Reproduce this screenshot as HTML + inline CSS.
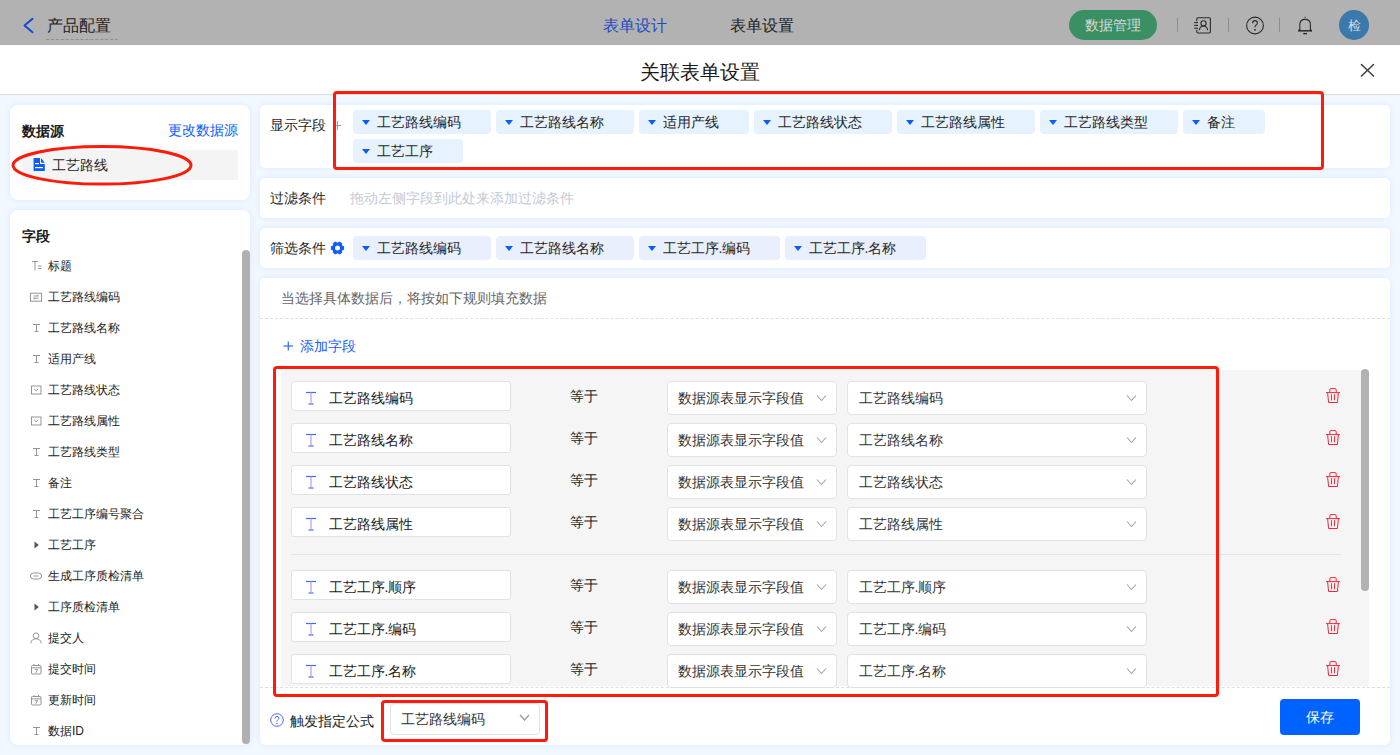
<!DOCTYPE html>
<html><head><meta charset="utf-8">
<style>
*{box-sizing:border-box;}
html,body{margin:0;padding:0;width:1400px;height:755px;overflow:hidden;background:#f2f8ff;}
body{position:relative;font-family:"Liberation Sans",sans-serif;color:#262626;}
.a{position:absolute;}
.t{position:absolute;white-space:nowrap;line-height:20px;}
svg{position:absolute;overflow:visible;}
#hdr{left:0;top:0;width:1400px;height:45px;background:#b2b2b2;}
#mh{left:0;top:45px;width:1400px;height:50px;background:#fff;border-bottom:1px solid #dcdcdc;}
.card{position:absolute;background:#fff;border-radius:8px;box-shadow:0 0 6px rgba(0,130,255,0.12);}
.card2{position:absolute;background:#fff;border-radius:5px;box-shadow:0 0 6px rgba(0,130,255,0.11);}
.tag{position:absolute;height:24px;border-radius:4px;background:#e6f2fe;}
.tag2{background:#e9effc;}
.tri{position:absolute;left:8.5px;top:10px;width:0;height:0;border-left:4.25px solid transparent;border-right:4.25px solid transparent;border-top:5px solid #0a5cff;}
.tag .t{left:23.5px;top:2px;font-size:14px;color:#262626;}
.li{font-size:12px;color:#222;}
.inp{position:absolute;left:291px;width:220px;height:30px;background:#fff;border:1px solid #e2e2e2;border-radius:3px;}
.sel{position:absolute;height:34px;background:#fff;border:1px solid #e2e2e2;border-radius:4px;}
.red{position:absolute;border:3px solid #ff1a0a;border-radius:4px;}
</style></head><body>

<!-- top header (under overlay) -->
<div id="hdr" class="a">
  <svg style="left:0;top:0" width="40" height="45"><polyline points="32.5,18.8 24.5,25.5 32.5,32.2" fill="none" stroke="#1448d0" stroke-width="2" stroke-linecap="round" stroke-linejoin="round"/></svg>
  <div class="t" style="left:47px;top:16px;font-size:16px;color:#222">产品配置</div>
  <div class="a" style="left:46px;top:39px;width:72px;height:0;border-top:1px dashed #8f8f8f"></div>
  <div class="t" style="left:603px;top:16px;font-size:16px;color:#1f4ac2">表单设计</div>
  <div class="t" style="left:730px;top:16px;font-size:16px;color:#222">表单设置</div>
  <div class="a" style="left:1069px;top:10px;width:88px;height:30px;border-radius:15px;background:#3a8f63"></div>
  <div class="t" style="left:1085px;top:15px;font-size:14px;color:#d9d9d9">数据管理</div>
  <div class="a" style="left:1177px;top:18px;width:1px;height:14px;background:#8c8c8c"></div>
  <div class="a" style="left:1228px;top:18px;width:1px;height:14px;background:#8c8c8c"></div>
  <div class="a" style="left:1279px;top:18px;width:1px;height:14px;background:#8c8c8c"></div>
  <!-- contact book -->
  <svg style="left:0;top:0" width="1400" height="45">
    <g fill="none" stroke="#2a2a2a" stroke-width="1.1">
      <path d="M1196.8,21.2 V18.9 Q1196.8,17.8 1198,17.8 H1209.2 Q1210.4,17.8 1210.4,19 V31.8 Q1210.4,33 1209.2,33 H1198 Q1196.8,33 1196.8,31.8 V29.8"/>
      <line x1="1194.2" y1="22.6" x2="1198" y2="22.6"/>
      <line x1="1194.2" y1="25.4" x2="1198" y2="25.4"/>
      <line x1="1194.2" y1="28.2" x2="1198" y2="28.2"/>
      <circle cx="1203.5" cy="23.3" r="2.6"/>
      <path d="M1199.4,30.2 Q1199.8,26 1203.5,26 Q1207.2,26 1207.6,30.2"/>
      <circle cx="1255" cy="25.5" r="8.4"/>
      <path d="M1252.6,23.2 Q1252.6,20.6 1255,20.6 Q1257.4,20.6 1257.4,22.9 Q1257.4,24.4 1255.8,25.2 Q1255,25.6 1255,27.2"/>
      <path d="M1299.8,30.6 V24.6 Q1299.8,19.4 1305.1,19.4 Q1310.4,19.4 1310.4,24.6 V30.6"/>
      <line x1="1298.2" y1="30.8" x2="1312" y2="30.8" stroke-width="1.5"/>
      <line x1="1303.3" y1="33.6" x2="1307" y2="33.6" stroke-width="1.4"/>
      <line x1="1304.6" y1="17.4" x2="1305.6" y2="17.4" stroke-width="1.4"/>
    </g>
    <circle cx="1255" cy="29.8" r="0.9" fill="#262626"/>
    <path d="M1299.8,29.5 L1298.4,31" stroke="#262626" stroke-width="1.2"/>
    <path d="M1310.4,29.5 L1311.8,31" stroke="#262626" stroke-width="1.2"/>
  </svg>
  <div class="a" style="left:1339px;top:10px;width:30px;height:30px;border-radius:15px;background:#3b78ab"></div>
  <div class="t" style="left:1348px;top:15.5px;font-size:13px;color:#d6dde3">检</div>
</div>

<!-- modal header -->
<div id="mh" class="a">
  <div class="t" style="left:640px;top:16.5px;font-size:20px;color:#1a1a1a">关联表单设置</div>
  <svg style="left:0;top:0" width="1400" height="50">
    <g stroke="#444" stroke-width="1.6" stroke-linecap="round"><line x1="1361.5" y1="19.5" x2="1373.5" y2="31"/><line x1="1373.5" y1="19.5" x2="1361.5" y2="31"/></g>
  </svg>
</div>

<!-- LEFT CARDS -->
<div class="card" style="left:10px;top:105px;width:240px;height:95px"></div>
<div class="card" style="left:10px;top:210px;width:240px;height:535px"></div>

<!-- RIGHT CARDS -->
<div class="card2" style="left:260px;top:105px;width:1130px;height:63px"></div>
<div class="card2" style="left:260px;top:178px;width:1130px;height:40px"></div>
<div class="card2" style="left:260px;top:228px;width:1130px;height:40px"></div>
<div class="card2" style="left:260px;top:278px;width:1130px;height:467px"></div>

<div class="t" style="left:22px;top:120.5px;font-size:14px;font-weight:bold;color:#1a1a1a">数据源</div>
<div class="t" style="left:168px;top:120px;font-size:14px;color:#0a5cff">更改数据源</div>
<div class="a" style="left:22px;top:150px;width:216px;height:30px;background:#f4f4f4;border-radius:2px"></div>
<svg style="left:0;top:0" width="60" height="200"><path d="M33.6,158 H40 V164 H44.8 V171 H33.6 Z" fill="#0a5cff"/><path d="M41,158 L44.8,162.8 H41 Z" fill="#0a5cff"/>
<rect x="35" y="163" width="4" height="1.2" fill="#fff"/><rect x="35" y="167" width="8" height="1.2" fill="#fff"/></svg>
<div class="t" style="left:52px;top:155px;font-size:14px;color:#262626">工艺路线</div>
<div class="t" style="left:22px;top:226px;font-size:14px;font-weight:bold;color:#1a1a1a">字段</div>
<div class="t li" style="left:48px;top:256px">标题</div>
<div class="t li" style="left:48px;top:287px">工艺路线编码</div>
<div class="t li" style="left:48px;top:318px">工艺路线名称</div>
<div class="t li" style="left:48px;top:349px">适用产线</div>
<div class="t li" style="left:48px;top:380px">工艺路线状态</div>
<div class="t li" style="left:48px;top:411px">工艺路线属性</div>
<div class="t li" style="left:48px;top:442px">工艺路线类型</div>
<div class="t li" style="left:48px;top:473px">备注</div>
<div class="t li" style="left:48px;top:504px">工艺工序编号聚合</div>
<div class="t li" style="left:48px;top:535px">工艺工序</div>
<div class="t li" style="left:48px;top:566px">生成工序质检清单</div>
<div class="t li" style="left:48px;top:597px">工序质检清单</div>
<div class="t li" style="left:48px;top:628px">提交人</div>
<div class="t li" style="left:48px;top:659px">提交时间</div>
<div class="t li" style="left:48px;top:690px">更新时间</div>
<div class="t li" style="left:48px;top:721px">数据ID</div>
<svg style="left:0;top:0" width="60" height="755"><g stroke="#959595" stroke-width="1" fill="none"><line x1="32" y1="261.5" x2="38" y2="261.5"/><line x1="35" y1="261.5" x2="35" y2="270.5"/><line x1="38" y1="266" x2="41.5" y2="266"/><line x1="38" y1="268.5" x2="41.5" y2="268.5"/></g><g stroke="#959595" stroke-width="1" fill="none"><rect x="30.5" y="293.2" width="11" height="8"/><path d="M33.5,296 H38.5 L37,294.8"/><path d="M38.5,298.2 H33.5 L35,299.4"/></g><g stroke="#959595" stroke-width="1" fill="none"><line x1="33" y1="324.5" x2="40" y2="324.5"/><line x1="36.5" y1="324.5" x2="36.5" y2="331.5"/><line x1="34.5" y1="331.5" x2="38.5" y2="331.5"/></g><g stroke="#959595" stroke-width="1" fill="none"><line x1="33" y1="355.5" x2="40" y2="355.5"/><line x1="36.5" y1="355.5" x2="36.5" y2="362.5"/><line x1="34.5" y1="362.5" x2="38.5" y2="362.5"/></g><g stroke="#959595" stroke-width="1" fill="none"><rect x="31.5" y="386" width="9.5" height="8"/><path d="M34.3,389 L36.2,390.8 L38.1,389"/></g><g stroke="#959595" stroke-width="1" fill="none"><rect x="31.5" y="417" width="9.5" height="8"/><path d="M34.3,420 L36.2,421.8 L38.1,420"/></g><g stroke="#959595" stroke-width="1" fill="none"><line x1="33" y1="448.5" x2="40" y2="448.5"/><line x1="36.5" y1="448.5" x2="36.5" y2="455.5"/><line x1="34.5" y1="455.5" x2="38.5" y2="455.5"/></g><g stroke="#959595" stroke-width="1" fill="none"><line x1="33" y1="479.5" x2="40" y2="479.5"/><line x1="36.5" y1="479.5" x2="36.5" y2="486.5"/><line x1="34.5" y1="486.5" x2="38.5" y2="486.5"/></g><g stroke="#959595" stroke-width="1" fill="none"><line x1="33" y1="510.5" x2="40" y2="510.5"/><line x1="36.5" y1="510.5" x2="36.5" y2="517.5"/><line x1="34.5" y1="517.5" x2="38.5" y2="517.5"/></g><path d="M34.5,541.5 L38.8,545 L34.5,548.5 Z" fill="#555"/><g stroke="#959595" stroke-width="1" fill="none"><rect x="30.5" y="573" width="11" height="6" rx="3"/><line x1="33.5" y1="576" x2="38.5" y2="576"/></g><path d="M34.5,603.5 L38.8,607 L34.5,610.5 Z" fill="#555"/><g stroke="#959595" stroke-width="1" fill="none"><circle cx="36" cy="635.7" r="2.8"/><path d="M30.8,643.3 Q31.3,638.8 36,638.8 Q40.7,638.8 41.2,643.3"/></g><g stroke="#959595" stroke-width="1" fill="none"><rect x="31.5" y="665.5" width="9.5" height="8.5" rx="1"/><line x1="31.5" y1="667.8" x2="41" y2="667.8"/><line x1="34" y1="664" x2="34" y2="666"/><line x1="38.5" y1="664" x2="38.5" y2="666"/><path d="M34.8,669.6 H37.6 L35.8,672.8"/></g><g stroke="#959595" stroke-width="1" fill="none"><rect x="31.5" y="696.5" width="9.5" height="8.5" rx="1"/><line x1="31.5" y1="698.8" x2="41" y2="698.8"/><line x1="34" y1="695" x2="34" y2="697"/><line x1="38.5" y1="695" x2="38.5" y2="697"/><path d="M34.8,700.6 H37.6 L35.8,703.8"/></g><g stroke="#959595" stroke-width="1" fill="none"><line x1="33" y1="727.5" x2="40" y2="727.5"/><line x1="36.5" y1="727.5" x2="36.5" y2="734.5"/><line x1="34.5" y1="734.5" x2="38.5" y2="734.5"/></g></svg>
<div class="a" style="left:242px;top:250px;width:7.5px;height:494px;background:#b0b0b0;border-radius:4px"></div>
<div class="t" style="left:270px;top:114.5px;font-size:14px;color:#1f1f1f">显示字段</div>
<svg style="left:0;top:0" width="400" height="200"><g stroke="#8f96a0" stroke-width="0.9"><line x1="333.5" y1="125.5" x2="341.2" y2="125.5"/><line x1="337.5" y1="121.2" x2="337.5" y2="129.8"/></g></svg>
<div class="tag" style="left:353px;top:110px;width:138px"><div class="tri"></div><div class="t">工艺路线编码</div></div><div class="tag" style="left:496px;top:110px;width:138px"><div class="tri"></div><div class="t">工艺路线名称</div></div><div class="tag" style="left:639px;top:110px;width:110px"><div class="tri"></div><div class="t">适用产线</div></div><div class="tag" style="left:754px;top:110px;width:138px"><div class="tri"></div><div class="t">工艺路线状态</div></div><div class="tag" style="left:897px;top:110px;width:138px"><div class="tri"></div><div class="t">工艺路线属性</div></div><div class="tag" style="left:1040px;top:110px;width:138px"><div class="tri"></div><div class="t">工艺路线类型</div></div><div class="tag" style="left:1183px;top:110px;width:82px"><div class="tri"></div><div class="t">备注</div></div>
<div class="tag" style="left:353px;top:139px;width:110px"><div class="tri"></div><div class="t">工艺工序</div></div>
<div class="t" style="left:270px;top:187.5px;font-size:14px;color:#1f1f1f">过滤条件</div>
<div class="t" style="left:350px;top:187.5px;font-size:14px;color:#c2cad6">拖动左侧字段到此处来添加过滤条件</div>
<div class="t" style="left:270px;top:238px;font-size:14px;color:#1f1f1f">筛选条件</div>
<svg style="left:0;top:0" width="400" height="300"><path d="M343.59,246.37 L343.59,249.63 L342.07,249.76 L341.31,251.08 L341.95,252.45 L339.13,254.09 L338.27,252.84 L336.73,252.84 L335.87,254.09 L333.05,252.45 L333.69,251.08 L332.93,249.76 L331.41,249.63 L331.41,246.37 L332.93,246.24 L333.69,244.92 L333.05,243.55 L335.87,241.91 L336.73,243.16 L338.27,243.16 L339.13,241.91 L341.95,243.55 L341.31,244.92 L342.07,246.24 Z" fill="#0a5cff" stroke="#0a5cff" stroke-width="1" stroke-linejoin="round"/><circle cx="337.5" cy="248" r="2.5" fill="#fff"/></svg>
<div class="tag tag2" style="left:353px;top:236px;width:138px"><div class="tri"></div><div class="t">工艺路线编码</div></div><div class="tag tag2" style="left:496px;top:236px;width:138px"><div class="tri"></div><div class="t">工艺路线名称</div></div><div class="tag tag2" style="left:639px;top:236px;width:141px"><div class="tri"></div><div class="t">工艺工序.编码</div></div><div class="tag tag2" style="left:785px;top:236px;width:141px"><div class="tri"></div><div class="t">工艺工序.名称</div></div>
<div class="t" style="left:280.5px;top:288px;font-size:14px;color:#666">当选择具体数据后，将按如下规则填充数据</div>
<div class="a" style="left:260px;top:318px;width:1130px;height:0;border-top:1px dashed #dedede"></div>
<svg style="left:0;top:0" width="400" height="400"><g stroke="#1a5cff" stroke-width="1.1"><line x1="283.5" y1="346" x2="293" y2="346"/><line x1="288.25" y1="341.5" x2="288.25" y2="350.5"/></g></svg>
<div class="t" style="left:300px;top:336px;font-size:14px;color:#1a5cff">添加字段</div>
<div class="a" style="left:281px;top:370px;width:1088px;height:316px;background:#f5f5f5"></div>
<div class="a" style="left:1361px;top:369px;width:8px;height:222px;background:#b2b2b2;border-radius:4px"></div>
<div class="inp" style="top:381px"></div>
<div class="t" style="left:328.5px;top:387.5px;font-size:14px;color:#1a1a1a">工艺路线编码</div>
<div class="t" style="left:570px;top:386px;font-size:14px;color:#1a1a1a">等于</div>
<div class="sel" style="left:667px;top:381px;width:170px"></div>
<div class="t" style="left:678px;top:388px;font-size:14px;color:#333">数据源表显示字段值</div>
<div class="sel" style="left:847px;top:381px;width:300px"></div>
<div class="t" style="left:858.5px;top:388px;font-size:14px;color:#333">工艺路线编码</div>
<div class="inp" style="top:423px"></div>
<div class="t" style="left:328.5px;top:429.5px;font-size:14px;color:#1a1a1a">工艺路线名称</div>
<div class="t" style="left:570px;top:428px;font-size:14px;color:#1a1a1a">等于</div>
<div class="sel" style="left:667px;top:423px;width:170px"></div>
<div class="t" style="left:678px;top:430px;font-size:14px;color:#333">数据源表显示字段值</div>
<div class="sel" style="left:847px;top:423px;width:300px"></div>
<div class="t" style="left:858.5px;top:430px;font-size:14px;color:#333">工艺路线名称</div>
<div class="inp" style="top:465px"></div>
<div class="t" style="left:328.5px;top:471.5px;font-size:14px;color:#1a1a1a">工艺路线状态</div>
<div class="t" style="left:570px;top:470px;font-size:14px;color:#1a1a1a">等于</div>
<div class="sel" style="left:667px;top:465px;width:170px"></div>
<div class="t" style="left:678px;top:472px;font-size:14px;color:#333">数据源表显示字段值</div>
<div class="sel" style="left:847px;top:465px;width:300px"></div>
<div class="t" style="left:858.5px;top:472px;font-size:14px;color:#333">工艺路线状态</div>
<div class="inp" style="top:507px"></div>
<div class="t" style="left:328.5px;top:513.5px;font-size:14px;color:#1a1a1a">工艺路线属性</div>
<div class="t" style="left:570px;top:512px;font-size:14px;color:#1a1a1a">等于</div>
<div class="sel" style="left:667px;top:507px;width:170px"></div>
<div class="t" style="left:678px;top:514px;font-size:14px;color:#333">数据源表显示字段值</div>
<div class="sel" style="left:847px;top:507px;width:300px"></div>
<div class="t" style="left:858.5px;top:514px;font-size:14px;color:#333">工艺路线属性</div>
<div class="inp" style="top:570px"></div>
<div class="t" style="left:328.5px;top:576.5px;font-size:14px;color:#1a1a1a">工艺工序.顺序</div>
<div class="t" style="left:570px;top:575px;font-size:14px;color:#1a1a1a">等于</div>
<div class="sel" style="left:667px;top:570px;width:170px"></div>
<div class="t" style="left:678px;top:577px;font-size:14px;color:#333">数据源表显示字段值</div>
<div class="sel" style="left:847px;top:570px;width:300px"></div>
<div class="t" style="left:858.5px;top:577px;font-size:14px;color:#333">工艺工序.顺序</div>
<div class="inp" style="top:612px"></div>
<div class="t" style="left:328.5px;top:618.5px;font-size:14px;color:#1a1a1a">工艺工序.编码</div>
<div class="t" style="left:570px;top:617px;font-size:14px;color:#1a1a1a">等于</div>
<div class="sel" style="left:667px;top:612px;width:170px"></div>
<div class="t" style="left:678px;top:619px;font-size:14px;color:#333">数据源表显示字段值</div>
<div class="sel" style="left:847px;top:612px;width:300px"></div>
<div class="t" style="left:858.5px;top:619px;font-size:14px;color:#333">工艺工序.编码</div>
<div class="inp" style="top:654px"></div>
<div class="t" style="left:328.5px;top:660.5px;font-size:14px;color:#1a1a1a">工艺工序.名称</div>
<div class="t" style="left:570px;top:659px;font-size:14px;color:#1a1a1a">等于</div>
<div class="sel" style="left:667px;top:654px;width:170px"></div>
<div class="t" style="left:678px;top:661px;font-size:14px;color:#333">数据源表显示字段值</div>
<div class="sel" style="left:847px;top:654px;width:300px"></div>
<div class="t" style="left:858.5px;top:661px;font-size:14px;color:#333">工艺工序.名称</div>
<div class="a" style="left:291px;top:554px;width:1050px;height:1px;background:#e3e3e3"></div>
<svg style="left:0;top:0" width="1400" height="755"><g stroke="#3b6cf6" stroke-width="1.2"><line x1="306" y1="392.5" x2="316" y2="392.5"/><line x1="308.5" y1="404" x2="313.5" y2="404"/></g><line x1="311" y1="392.5" x2="311" y2="404" stroke="#b79cf2" stroke-width="1.2"/><polyline points="817.0,395.5 821.5,400.5 826.0,395.5" fill="none" stroke="#a3a3a3" stroke-width="1.1"/><polyline points="1127.0,395.5 1131.5,400.5 1136.0,395.5" fill="none" stroke="#a3a3a3" stroke-width="1.1"/><g fill="none" stroke="#f5263a" stroke-width="1" stroke-linejoin="round"><path d="M1329.8,392.4 V389.8 Q1329.8,388.6 1331,388.6 H1335 Q1336.2,388.6 1336.2,389.8 V392.4"/><line x1="1326" y1="392.6" x2="1340" y2="392.6"/><path d="M1327.6,392.6 L1328.6,402.5 H1337.4 L1338.4,392.6"/><line x1="1331.4" y1="394.2" x2="1331.6" y2="400.3"/><line x1="1334.6" y1="394.2" x2="1334.4" y2="400.3"/></g><g stroke="#3b6cf6" stroke-width="1.2"><line x1="306" y1="434.5" x2="316" y2="434.5"/><line x1="308.5" y1="446" x2="313.5" y2="446"/></g><line x1="311" y1="434.5" x2="311" y2="446" stroke="#b79cf2" stroke-width="1.2"/><polyline points="817.0,437.5 821.5,442.5 826.0,437.5" fill="none" stroke="#a3a3a3" stroke-width="1.1"/><polyline points="1127.0,437.5 1131.5,442.5 1136.0,437.5" fill="none" stroke="#a3a3a3" stroke-width="1.1"/><g fill="none" stroke="#f5263a" stroke-width="1" stroke-linejoin="round"><path d="M1329.8,434.4 V431.8 Q1329.8,430.6 1331,430.6 H1335 Q1336.2,430.6 1336.2,431.8 V434.4"/><line x1="1326" y1="434.6" x2="1340" y2="434.6"/><path d="M1327.6,434.6 L1328.6,444.5 H1337.4 L1338.4,434.6"/><line x1="1331.4" y1="436.2" x2="1331.6" y2="442.3"/><line x1="1334.6" y1="436.2" x2="1334.4" y2="442.3"/></g><g stroke="#3b6cf6" stroke-width="1.2"><line x1="306" y1="476.5" x2="316" y2="476.5"/><line x1="308.5" y1="488" x2="313.5" y2="488"/></g><line x1="311" y1="476.5" x2="311" y2="488" stroke="#b79cf2" stroke-width="1.2"/><polyline points="817.0,479.5 821.5,484.5 826.0,479.5" fill="none" stroke="#a3a3a3" stroke-width="1.1"/><polyline points="1127.0,479.5 1131.5,484.5 1136.0,479.5" fill="none" stroke="#a3a3a3" stroke-width="1.1"/><g fill="none" stroke="#f5263a" stroke-width="1" stroke-linejoin="round"><path d="M1329.8,476.4 V473.8 Q1329.8,472.6 1331,472.6 H1335 Q1336.2,472.6 1336.2,473.8 V476.4"/><line x1="1326" y1="476.6" x2="1340" y2="476.6"/><path d="M1327.6,476.6 L1328.6,486.5 H1337.4 L1338.4,476.6"/><line x1="1331.4" y1="478.2" x2="1331.6" y2="484.3"/><line x1="1334.6" y1="478.2" x2="1334.4" y2="484.3"/></g><g stroke="#3b6cf6" stroke-width="1.2"><line x1="306" y1="518.5" x2="316" y2="518.5"/><line x1="308.5" y1="530" x2="313.5" y2="530"/></g><line x1="311" y1="518.5" x2="311" y2="530" stroke="#b79cf2" stroke-width="1.2"/><polyline points="817.0,521.5 821.5,526.5 826.0,521.5" fill="none" stroke="#a3a3a3" stroke-width="1.1"/><polyline points="1127.0,521.5 1131.5,526.5 1136.0,521.5" fill="none" stroke="#a3a3a3" stroke-width="1.1"/><g fill="none" stroke="#f5263a" stroke-width="1" stroke-linejoin="round"><path d="M1329.8,518.4 V515.8 Q1329.8,514.6 1331,514.6 H1335 Q1336.2,514.6 1336.2,515.8 V518.4"/><line x1="1326" y1="518.6" x2="1340" y2="518.6"/><path d="M1327.6,518.6 L1328.6,528.5 H1337.4 L1338.4,518.6"/><line x1="1331.4" y1="520.2" x2="1331.6" y2="526.3"/><line x1="1334.6" y1="520.2" x2="1334.4" y2="526.3"/></g><g stroke="#3b6cf6" stroke-width="1.2"><line x1="306" y1="581.5" x2="316" y2="581.5"/><line x1="308.5" y1="593" x2="313.5" y2="593"/></g><line x1="311" y1="581.5" x2="311" y2="593" stroke="#b79cf2" stroke-width="1.2"/><polyline points="817.0,584.5 821.5,589.5 826.0,584.5" fill="none" stroke="#a3a3a3" stroke-width="1.1"/><polyline points="1127.0,584.5 1131.5,589.5 1136.0,584.5" fill="none" stroke="#a3a3a3" stroke-width="1.1"/><g fill="none" stroke="#f5263a" stroke-width="1" stroke-linejoin="round"><path d="M1329.8,581.4 V578.8 Q1329.8,577.6 1331,577.6 H1335 Q1336.2,577.6 1336.2,578.8 V581.4"/><line x1="1326" y1="581.6" x2="1340" y2="581.6"/><path d="M1327.6,581.6 L1328.6,591.5 H1337.4 L1338.4,581.6"/><line x1="1331.4" y1="583.2" x2="1331.6" y2="589.3"/><line x1="1334.6" y1="583.2" x2="1334.4" y2="589.3"/></g><g stroke="#3b6cf6" stroke-width="1.2"><line x1="306" y1="623.5" x2="316" y2="623.5"/><line x1="308.5" y1="635" x2="313.5" y2="635"/></g><line x1="311" y1="623.5" x2="311" y2="635" stroke="#b79cf2" stroke-width="1.2"/><polyline points="817.0,626.5 821.5,631.5 826.0,626.5" fill="none" stroke="#a3a3a3" stroke-width="1.1"/><polyline points="1127.0,626.5 1131.5,631.5 1136.0,626.5" fill="none" stroke="#a3a3a3" stroke-width="1.1"/><g fill="none" stroke="#f5263a" stroke-width="1" stroke-linejoin="round"><path d="M1329.8,623.4 V620.8 Q1329.8,619.6 1331,619.6 H1335 Q1336.2,619.6 1336.2,620.8 V623.4"/><line x1="1326" y1="623.6" x2="1340" y2="623.6"/><path d="M1327.6,623.6 L1328.6,633.5 H1337.4 L1338.4,623.6"/><line x1="1331.4" y1="625.2" x2="1331.6" y2="631.3"/><line x1="1334.6" y1="625.2" x2="1334.4" y2="631.3"/></g><g stroke="#3b6cf6" stroke-width="1.2"><line x1="306" y1="665.5" x2="316" y2="665.5"/><line x1="308.5" y1="677" x2="313.5" y2="677"/></g><line x1="311" y1="665.5" x2="311" y2="677" stroke="#b79cf2" stroke-width="1.2"/><polyline points="817.0,668.5 821.5,673.5 826.0,668.5" fill="none" stroke="#a3a3a3" stroke-width="1.1"/><polyline points="1127.0,668.5 1131.5,673.5 1136.0,668.5" fill="none" stroke="#a3a3a3" stroke-width="1.1"/><g fill="none" stroke="#f5263a" stroke-width="1" stroke-linejoin="round"><path d="M1329.8,665.4 V662.8 Q1329.8,661.6 1331,661.6 H1335 Q1336.2,661.6 1336.2,662.8 V665.4"/><line x1="1326" y1="665.6" x2="1340" y2="665.6"/><path d="M1327.6,665.6 L1328.6,675.5 H1337.4 L1338.4,665.6"/><line x1="1331.4" y1="667.2" x2="1331.6" y2="673.3"/><line x1="1334.6" y1="667.2" x2="1334.4" y2="673.3"/></g></svg>
<div class="a" style="left:260px;top:687px;width:1130px;height:0;border-top:1px dashed #dedede"></div>
<svg style="left:0;top:0" width="400" height="755"><circle cx="277" cy="720" r="6.3" fill="none" stroke="#4a6cf7" stroke-width="1"/><path d="M275.1,718.4 Q275.1,716.4 277,716.4 Q278.9,716.4 278.9,718.2 Q278.9,719.3 277.7,719.9 Q277,720.3 277,721.6" fill="none" stroke="#4a6cf7" stroke-width="1"/><circle cx="277" cy="723.4" r="0.7" fill="#4a6cf7"/></svg>
<div class="t" style="left:290px;top:710.5px;font-size:14px;color:#1a1a1a">触发指定公式</div>
<div class="sel" style="left:390px;top:703px;width:150px;height:32px"></div>
<div class="t" style="left:401px;top:709px;font-size:14px;color:#333">工艺路线编码</div>
<svg style="left:0;top:0" width="600" height="755"><polyline points="520,715 524.5,720 529,715" fill="none" stroke="#999" stroke-width="1.2"/></svg>
<div class="a" style="left:1280px;top:699px;width:80px;height:36px;background:#0062ff;border-radius:4px"></div>
<div class="t" style="left:1306px;top:707px;font-size:14px;color:#fff">保存</div>
<div class="red" style="left:333px;top:91px;width:991px;height:78.5px"></div>
<div class="red" style="left:273px;top:366px;width:946px;height:331px"></div>
<div class="red" style="left:381px;top:700px;width:167px;height:42px"></div>
<svg style="left:0;top:0" width="300" height="300"><ellipse cx="102" cy="165.3" rx="89" ry="18.8" fill="none" stroke="#ff1a0a" stroke-width="3"/></svg>

</body></html>
